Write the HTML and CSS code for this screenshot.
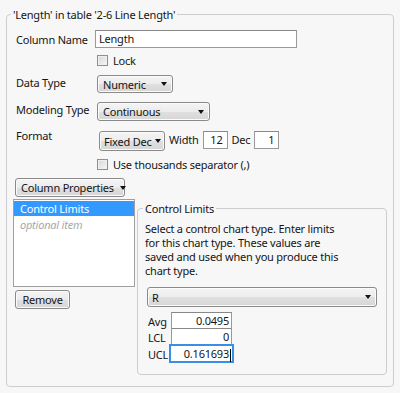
FILE: index.html
```html
<!DOCTYPE html>
<html lang="en">
<head>
<meta charset="utf-8" />
<title>Column Info</title>
<link rel="stylesheet" href="styles.css">
</head>
<body>
<fieldset class="group">
<legend>'Length' in table '2-6 Line Length'</legend>

<div class="row row-name">
  <span class="lbl">Column Name</span>
  <span class="textbox name-box">Length</span>
</div>
<div class="row row-lock">
  <span class="lbl"></span>
  <span class="check"></span><span>Lock</span>
</div>
<div class="row row-type">
  <span class="lbl">Data Type</span>
  <span class="combo combo-type">Numeric<i class="arrow"></i></span>
</div>
<div class="row row-model">
  <span class="lbl">Modeling Type</span>
  <span class="combo combo-model">Continuous<i class="arrow"></i></span>
</div>
<div class="row row-format">
  <span class="lbl lbl-format">Format</span>
  <span class="combo combo-format">Fixed Dec<i class="arrow"></i></span>
  <span class="inline-lbl">Width</span>
  <span class="textbox num-box">12</span>
  <span class="inline-lbl">Dec</span>
  <span class="textbox num-box">1</span>
</div>
<div class="row row-sep">
  <span class="lbl"></span>
  <span class="check"></span><span>Use thousands separator (,)</span>
</div>

<div class="row-props">
  <span class="combo combo-props">Column Properties<i class="arrow"></i></span>
</div>

<div class="props">
  <div class="props-left">
    <div class="listbox">
      <div class="item selected">Control Limits</div>
      <div class="item optional">optional item</div>
    </div>
    <span class="button">Remove</span>
  </div>

  <fieldset class="subgroup">
    <legend>Control Limits</legend>
    <p class="help">Select a control chart type. Enter limits<br />
    for this chart type. These values are<br />
    saved and used when you produce this<br />
    chart type.</p>
    <span class="combo combo-chart">R<i class="arrow"></i></span>
    <div class="limits">
      <span class="lim-lbl">Avg</span><span class="textbox lim-box">0.0495</span>
      <span class="lim-lbl">LCL</span><span class="textbox lim-box">0</span>
      <span class="lim-lbl">UCL</span><span class="textbox lim-box focused">0.161693<i class="caret"></i></span>
    </div>
  </fieldset>
</div>
</fieldset>
</body>
</html>
```

FILE: styles.css
```css
body { margin: 0; padding: 7px 6px 0 6px; background: #f7f7f7; font-family: "Noto Sans", sans-serif; font-size: 11px; letter-spacing: -0.22px; color: #151515; }

.group { margin: 0; border: 1px solid #cdcdcd; border-radius: 4px; padding: 0 6px 10px 6px; height: 380px; box-sizing: border-box; }
.group legend, .subgroup legend { padding: 0 2px; margin-left: -2px; line-height: 15px; }

.row { display: flex; align-items: center; padding-left: 3px; line-height: 15px; }
.lbl { width: 81px; flex: none; }
.row-name { margin-top: 8px; height: 18px; }
.row-lock { margin-top: 7px; height: 11px; }
.row-type { margin-top: 9px; height: 18px; align-items: flex-start; }
.row-model { margin-top: 9px; height: 19px; align-items: flex-start; }
.row-format { margin-top: 10px; height: 20px; align-items: flex-start; }
.row-sep { margin-top: 8px; height: 11px; }
.lbl-format { margin-top: -3px; }
.row-props { margin-top: 8px; padding-left: 2px; height: 19px; }

.textbox { display: inline-block; box-sizing: border-box; height: 18px; line-height: 16px; border: 1px solid #999; border-top-color: #888; background: #fff; padding: 0 3px; white-space: nowrap; }
.name-box { width: 202px; margin-left: -2px; }
.num-box { width: 25px; text-align: right; padding: 0 4px; }
.inline-lbl { margin: 0 4px; line-height: 18px; }

.check { width: 11px; height: 11px; box-sizing: border-box; border: 1px solid #8e8f8f; background: linear-gradient(135deg, #d8d8d8, #f6f6f6); box-shadow: inset 0 0 0 1px #f0f0f0; margin-right: 5px; }

.combo { display: inline-flex; align-items: center; justify-content: space-between; box-sizing: border-box; height: 19px; border: 1px solid #8a8a8a; border-radius: 3px; background: linear-gradient(#f4f4f4, #ececec 50%, #e0e0e0 50%, #d6d6d6); box-shadow: inset 0 0 0 1px #fbfbfb; padding: 0 5px; white-space: nowrap; }
.arrow { display: inline-block; flex: none; width: 0; height: 0; border-left: 3.5px solid transparent; border-right: 3.5px solid transparent; border-top: 4px solid #111; margin-left: 6px; }
.combo-type { width: 76px; height: 18px; }
.combo-model { width: 113px; }
.combo-format { width: 66px; height: 20px; margin-left: 2px; padding: 0 3px 0 4px; }
.combo-format .arrow { margin-left: 3px; }
.combo-props { width: 110px; padding: 0 4px 0 5px; }

.props { display: flex; gap: 2px; margin-top: 2px; }
.props-left { width: 122px; flex: none; }
.listbox { height: 88px; box-sizing: border-box; border: 1px solid #a0a0a0; background: #fff; padding: 1px 0; }
.item { height: 15px; line-height: 15px; padding-left: 6px; }
.item.selected { background: #3399ff; color: #fff; }
.item.optional { color: #a8a8a8; font-style: italic; padding-top: 1px; }
.button { display: inline-block; margin: 3px 0 0 2px; box-sizing: border-box; width: 55px; height: 19px; line-height: 17px; text-align: center; border: 1px solid #8a8a8a; border-radius: 3px; background: linear-gradient(#f4f4f4, #ececec 50%, #e0e0e0 50%, #d6d6d6); box-shadow: inset 0 0 0 1px #fbfbfb; }

.subgroup { flex: 1; margin: 2px 0 0 0; border: 1px solid #cdcdcd; border-radius: 4px; padding: 0 8px 10px 7px; height: 174px; box-sizing: border-box; }
.help { margin: 6px 0 0 0; line-height: 14px; white-space: nowrap; }
.combo-chart { display: flex; width: 230px; margin: 9px 0 0 2px; height: 20px; padding-left: 4px; }

.limits { display: grid; grid-template-columns: 23px 63px; margin: 6px 0 0 3px; align-items: center; }
.lim-box { height: 17px; line-height: 15px; text-align: right; width: 61px; margin-top: -1px; padding: 0 2px; }
.lim-box.focused { border: 2px solid #3a8ee6; width: 65px; height: 19px; margin-left: -2px; padding: 0 1px; }
.caret { display: inline-block; width: 1px; height: 13px; background: #000; vertical-align: middle; margin-left: 1px; }
```
